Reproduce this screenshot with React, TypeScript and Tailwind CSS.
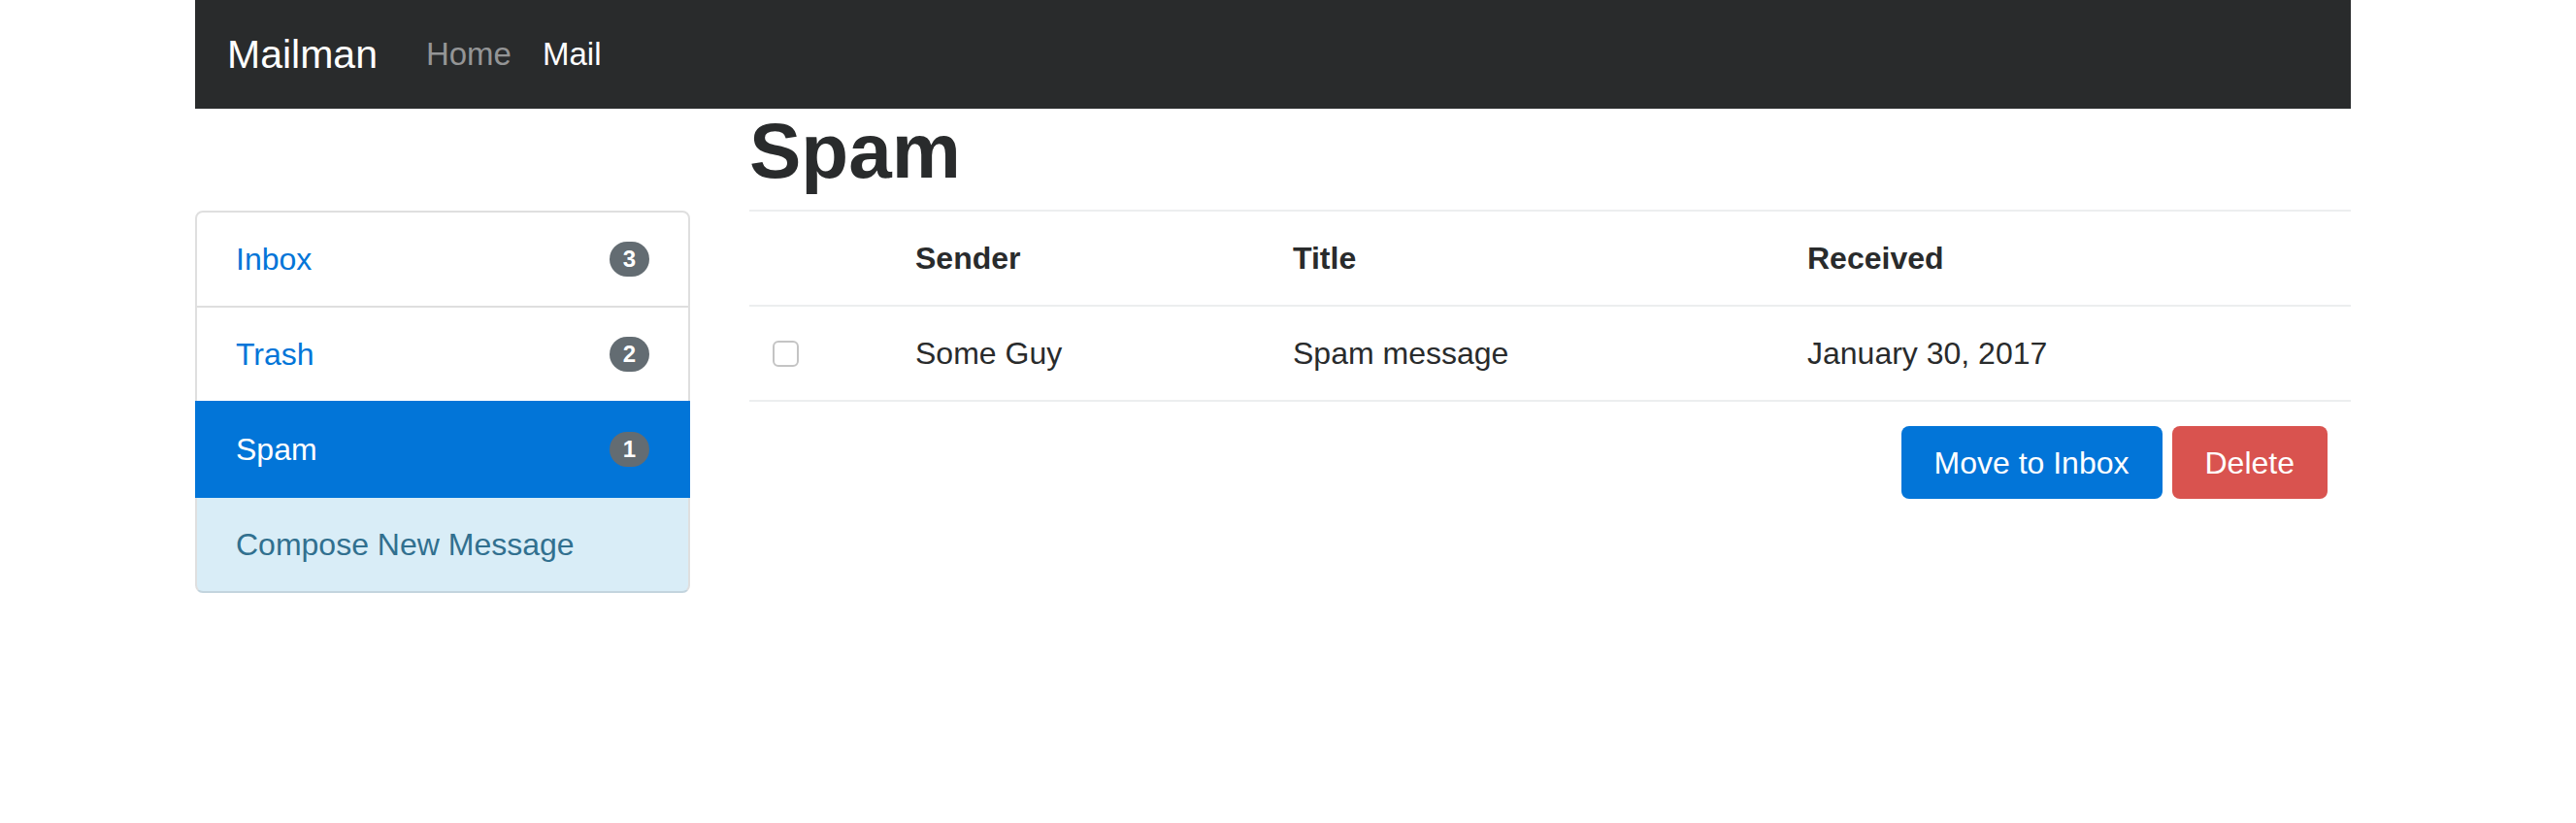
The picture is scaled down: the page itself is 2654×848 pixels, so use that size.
import React from 'react';

type Folder = { name: string; count: number; active?: boolean };

const folders: Folder[] = [
  { name: 'Inbox', count: 3 },
  { name: 'Trash', count: 2 },
  { name: 'Spam', count: 1, active: true },
];

const Badge: React.FC<{ count: number }> = ({ count }) => (
  <span className="inline-block rounded-full bg-[#636c72] px-[14px] py-[6px] text-[24px] font-bold leading-[24px] text-white">
    {count}
  </span>
);

const Sidebar: React.FC = () => (
  <div className="mt-[105px] w-[510px] text-[32px] leading-[48px]">
    {folders.map((f, i) => (
      <a
        key={f.name}
        href="#"
        className={
          'relative -mb-[2px] flex items-center justify-between border-2 px-[40px] py-[24px] ' +
          (i === 0 ? 'rounded-t-[8px] ' : '') +
          (f.active
            ? 'z-10 border-[#0275d8] bg-[#0275d8] text-white'
            : 'border-[#dfdfdf] bg-white text-[#0275d8]')
        }
      >
        <span>{f.name}</span>
        <Badge count={f.count} />
      </a>
    ))}
    <a
      href="#"
      className="relative flex items-center rounded-b-[8px] border-2 border-[#dfdfdf] border-b-[#c3d4de] bg-[#d9edf7] px-[40px] py-[24px] text-[#31708f]"
    >
      Compose New Message
    </a>
  </div>
);

const MessageTable: React.FC = () => (
  <table className="w-full border-collapse text-left text-[32px] leading-[48px]">
    <thead>
      <tr>
        <th className="w-[147px] border-t-2 border-b-2 border-[#eceeef] p-[24px]"></th>
        <th className="w-[389px] border-t-2 border-b-2 border-[#eceeef] p-[24px] font-bold">Sender</th>
        <th className="w-[530px] border-t-2 border-b-2 border-[#eceeef] p-[24px] font-bold">Title</th>
        <th className="border-t-2 border-b-2 border-[#eceeef] p-[24px] font-bold">Received</th>
      </tr>
    </thead>
    <tbody>
      <tr>
        <td className="border-b-2 border-[#eceeef] p-[24px] align-middle">
          <div className="h-[27px] w-[27px] rounded-[6px] border-2 border-[#c4c4c4] bg-white" />
        </td>
        <td className="border-b-2 border-[#eceeef] p-[24px]">Some Guy</td>
        <td className="border-b-2 border-[#eceeef] p-[24px]">Spam message</td>
        <td className="border-b-2 border-[#eceeef] p-[24px]">January 30, 2017</td>
      </tr>
    </tbody>
  </table>
);

export default function App() {
  return (
    <div className="min-h-[848px] bg-white font-['Liberation_Sans',Arial,sans-serif] text-[#292b2c]">
      <div className="ml-[201px] w-[2221px]">
        <nav className="flex h-[112px] items-center bg-[#292b2c] px-[33px]">
          <a href="#" className="mr-[34px] text-[41px] leading-[48px] text-white">
            Mailman
          </a>
          <a href="#" className="px-[16px] text-[33px] leading-[48px] text-[#949596]">
            Home
          </a>
          <a href="#" className="px-[16px] text-[33px] leading-[48px] text-white">
            Mail
          </a>
        </nav>
        <div className="flex gap-[61px]">
          <Sidebar />
          <main className="flex-1">
            <h1 className="mb-[16px] text-[80px] font-bold leading-[88px]">Spam</h1>
            <MessageTable />
            <div className="mt-[25px] flex justify-end gap-[10px] pr-[24px]">
              <button className="h-[75px] rounded-[8px] bg-[#0275d8] px-[34px] text-[32px] text-white">
                Move to Inbox
              </button>
              <button className="h-[75px] rounded-[8px] bg-[#d9534f] px-[34px] text-[32px] text-white">
                Delete
              </button>
            </div>
          </main>
        </div>
      </div>
    </div>
  );
}
